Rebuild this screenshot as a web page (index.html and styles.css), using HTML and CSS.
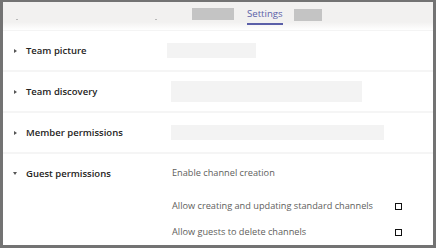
FILE: index.html
```html
<!DOCTYPE html>
<html lang="en">
<head>
  <meta charset="UTF-8">
  <meta name="viewport" content="width=device-width, initial-scale=1.0">
  <title>Team settings</title>
  <link rel="stylesheet" href="styles.css">
</head>
<body>
  <div class="window">
    <div class="tabs">
      <span class="speck speck-1"></span>
      <span class="speck speck-2"></span>
      <span class="tab-blank tab-blank-1"></span>
      <span class="tab active">Settings</span>
      <span class="tab-blank tab-blank-2"></span>
    </div>

    <div class="row">
      <div class="label"><span class="chev"></span>Team picture</div>
      <div class="value"><span class="blank blank-pic"></span></div>
    </div>
    <div class="row">
      <div class="label"><span class="chev"></span>Team discovery</div>
      <div class="value"><span class="blank blank-disc"></span></div>
    </div>
    <div class="row">
      <div class="label"><span class="chev"></span>Member permissions</div>
      <div class="value"><span class="blank blank-mem"></span></div>
    </div>

    <div class="row open">
      <div class="label"><span class="chev down"></span>Guest permissions</div>
      <div class="options">
        <div class="option heading">Enable channel creation</div>
        <div class="option">Allow creating and updating standard channels <span class="check"></span></div>
        <div class="option">Allow guests to delete channels <span class="check"></span></div>
      </div>
    </div>
  </div>
</body>
</html>
```

FILE: styles.css
```css
body { margin: 0; background: #fff; font-family: "Open Sans", "Noto Sans", sans-serif; }
.window { width: 430px; height: 243px; border: 3px solid #737373; border-top-width: 2px; background: #fff; overflow: hidden; }

.tabs { position: relative; height: 28px; background: linear-gradient(#f2f1f0 0, #f2f1f0 20px, #fff 28px); border-bottom: 1px solid #f4f4f4; display: flex; align-items: flex-start; }
.speck { position: absolute; top: 17px; width: 2px; height: 1px; background: #b8b8b8; }
.speck-1 { left: 13px; }
.speck-2 { left: 152px; }
.tab-blank { background: #c4c4c4; height: 12px; margin-top: 6px; }
.tab-blank-1 { width: 42px; margin-left: 189px; }
.tab-blank-2 { width: 28px; height: 12px; margin-top: 7px; margin-left: 11px; }
.tab { margin-left: 13px; padding-top: 5px; font-size: 9.6px; color: #5b5fa8; line-height: 14px; height: 16px; border-bottom: 2px solid #5b5fa8; }

.row { display: flex; align-items: center; height: 39px; border-bottom: 2px solid #f5f5f5; }
.label { width: 164px; display: flex; align-items: center; font-size: 9.5px; font-weight: 600; color: #252423; }
.chev { width: 0; height: 0; margin: 0 9px 0 11px; border-left: 3px solid #555; border-top: 2.5px solid transparent; border-bottom: 2.5px solid transparent; }
.chev.down { border-left: 2.5px solid transparent; border-right: 2.5px solid transparent; border-top: 3px solid #555; border-bottom: 0; margin-left: 10px; margin-right: 9px; }

.blank { display: block; background: #f3f3f3; }
.blank-pic { width: 89px; height: 15px; }
.blank-disc { width: 191px; height: 21px; margin-left: 4px; }
.blank-mem { width: 213px; height: 15px; margin-left: 4px; }

.row.open { align-items: flex-start; height: auto; border-bottom: 0; padding-top: 13px; }
.row.open .label { height: 12px; }
.options { display: flex; flex-direction: column; margin-left: 5px; }
.option { display: flex; align-items: center; width: 230px; font-size: 9.2px; color: #605e5c; line-height: 12px; }
.option.heading { margin-bottom: 21px; }
.option:last-child { margin-top: 14px; }
.check { margin-left: auto; width: 5px; height: 5px; border: 1px solid #111; }
```
